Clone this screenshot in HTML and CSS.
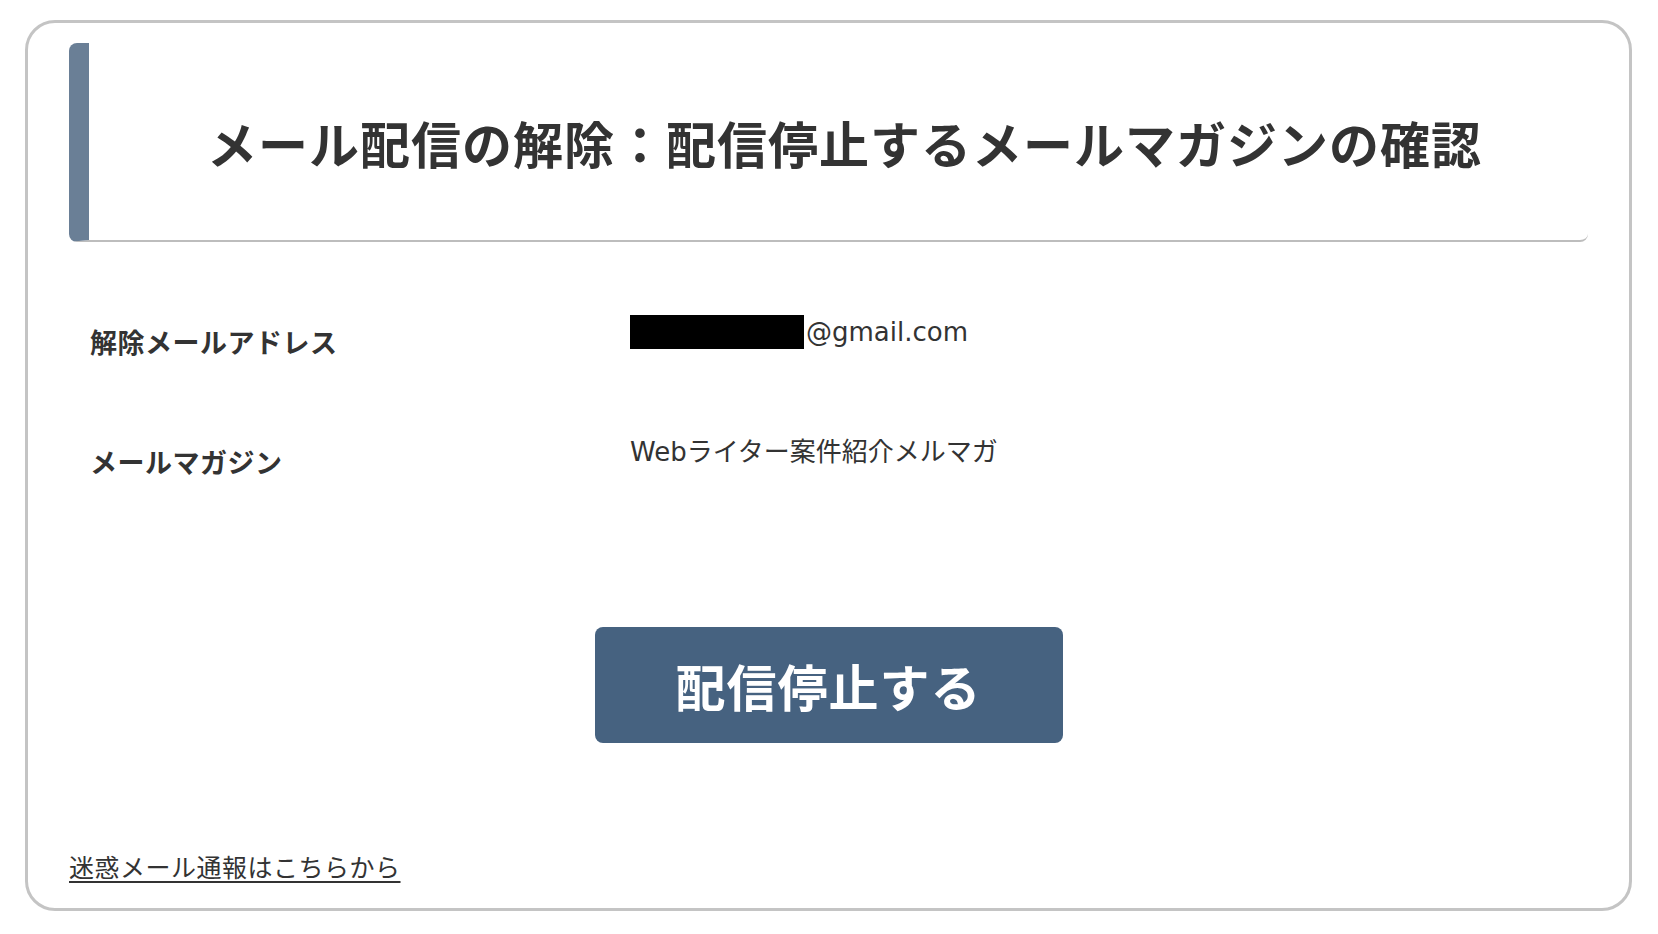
FILE: index.html
```html
<!DOCTYPE html>
<html lang="ja">
<head>
<meta charset="utf-8">
<title>メール配信の解除</title>
<link rel="stylesheet" href="styles.css">
</head>
<body>
<div class="card">
  <div class="header">
    <h1 class="title">メール配信の解除：配信停止するメールマガジンの確認</h1>
  </div>
  <div class="info">
    <div class="label">解除メールアドレス</div>
    <div class="value"><span class="redact"></span>@gmail.com</div>
    <div class="label">メールマガジン</div>
    <div class="value">Webライター案件紹介メルマガ</div>
  </div>
  <div class="actions">
    <button class="submit" type="button">配信停止する</button>
  </div>
  <a class="report" href="#">迷惑メール通報はこちらから</a>
</div>
</body>
</html>
```

FILE: styles.css
```css
html, body {
  margin: 0;
  padding: 0;
  background: #ffffff;
}
body {
  padding: 20px 26px 23px 25px;
  font-family: "Noto Sans CJK JP", sans-serif;
  color: #333333;
}
.card {
  box-sizing: border-box;
  width: 1607px;
  height: 891px;
  border: 3px solid #c4c4c4;
  border-radius: 30px;
  padding: 20px 41px 0 41px;
}
.header {
  box-sizing: border-box;
  height: 199px;
  padding-left: 12px;
  border-left: 20px solid #6a7f96;
  border-bottom: 2px solid #bdbdbd;
  border-radius: 8px;
  display: flex;
  align-items: center;
  justify-content: center;
}
.title {
  margin: 0;
  font-size: 50px;
  font-weight: 700;
  line-height: 60px;
  letter-spacing: 1px;
  color: #333333;
}
.info {
  margin-top: 70px;
  padding-left: 21px;
  display: grid;
  grid-template-columns: 540px 1fr;
  grid-auto-rows: 120px;
}
.label {
  padding-top: 10px;
  font-size: 27px;
  font-weight: 700;
  line-height: 40px;
  letter-spacing: 0.5px;
}
.value {
  font-family: "DejaVu Sans", "Noto Sans CJK JP", sans-serif;
  font-size: 26px;
  line-height: 40px;
  display: flex;
  align-items: center;
  height: 40px;
}
.redact {
  display: inline-block;
  width: 174px;
  height: 34px;
  background: #000000;
  margin-right: 2px;
}
.actions {
  margin-top: 75px;
  display: flex;
  justify-content: center;
}
.submit {
  width: 468px;
  height: 116px;
  border: none;
  border-radius: 8px;
  background: #466280;
  color: #ffffff;
  font-family: "Noto Sans CJK JP", sans-serif;
  font-size: 50px;
  font-weight: 700;
  letter-spacing: 1px;
  padding: 0;
}
.report {
  display: inline-block;
  margin-top: 105px;
  font-size: 25px;
  line-height: 36px;
  letter-spacing: 0.5px;
  color: #333333;
  text-decoration: underline;
  text-underline-offset: 4px;
  text-decoration-thickness: 2px;
}
```
